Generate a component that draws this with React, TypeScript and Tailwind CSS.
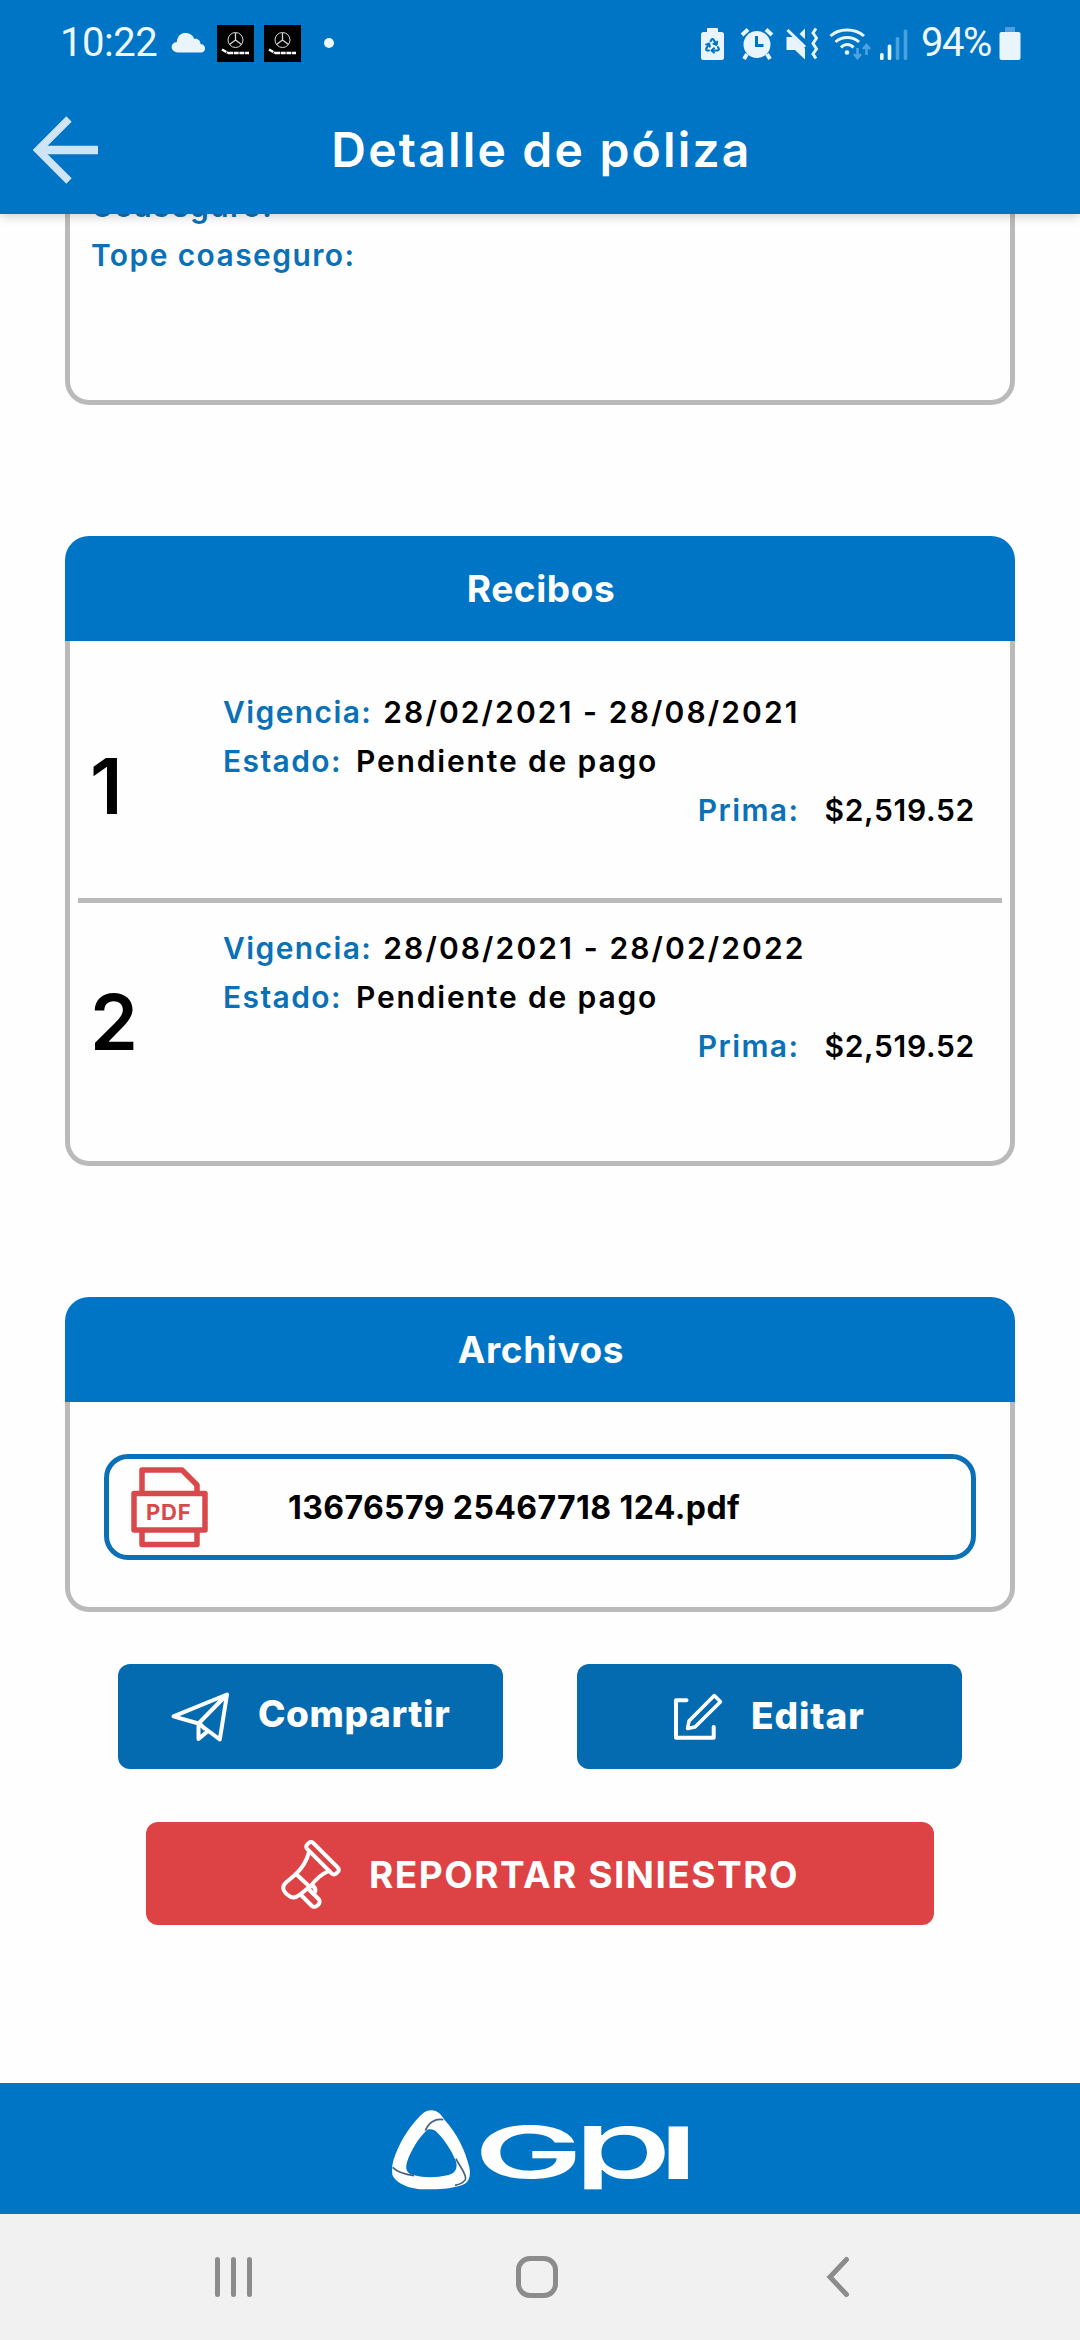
import type { ReactNode } from "react";
import { Recycle } from "lucide-react";

const receipts = [
  { id: 1, period: "28/02/2021 - 28/08/2021", status: "Pendiente de pago", amount: "$2,519.52" },
  { id: 2, period: "28/08/2021 - 28/02/2022", status: "Pendiente de pago", amount: "$2,519.52" },
];

function NotificationThumb() {
  return (
    <svg width="37" height="37" viewBox="0 0 37 37" className="bg-black">
      <g fill="none" stroke="#d8d8d8">
        <circle cx="18.5" cy="15" r="7.5" strokeWidth="1" />
        <path d="M18.5 8v7l-6 4.5M18.5 15l6 4.5" strokeWidth="1.3" />
        <path d="M5 24.5l6 3.5M11 28h21" stroke="#fff" strokeWidth="2.5" strokeDasharray="5 0.7" />
      </g>
    </svg>
  );
}

function StatusBar() {
  return (
    <div className="flex h-[86px] items-center justify-between pl-[60px] pr-[59px] font-['Roboto',sans-serif] text-[40px] text-[#edf8ff]">
      <div className="flex items-center">
        <span className="w-[111px] tracking-[-0.5px]">10:22</span>
        <svg width="35" height="22" viewBox="0 0 35 22" fill="#e9f4fc">
          <path d="M7 20.500C-1.500 20-1 10.500 5.800 10C6.500 3 10.500 1 14.500 1C19 1 22 3.500 23.300 7C27 6.200 29.500 9 29.500 12C35.500 12.500 35.500 20 30 20.500Z" />
        </svg>
        <div className="ml-[11px] flex gap-[10px]">
          <NotificationThumb />
          <NotificationThumb />
        </div>
        <span className="ml-[23px] size-[10px] rounded-full bg-[#edf8ff]" />
      </div>

      <div className="flex items-center">
        {/* battery protection */}
        <svg width="25" height="33" viewBox="0 0 25 33" fill="#e9f4fc">
          <rect x="7" y="1" width="11" height="6" rx="1" />
          <rect x="1" y="5" width="23" height="28" rx="2.500" />
          <Recycle x="4" y="10" width="17" height="17" color="#0075c6" strokeWidth={3} />
        </svg>
        {/* alarm */}
        <svg width="34" height="33" viewBox="0 0 34 33" className="ml-[15px]" fill="none" stroke="#e9f4fc">
          <circle cx="17" cy="17.500" r="13.500" fill="#e9f4fc" stroke="none" />
          <path d="M2 8l6-5.500M32 8l-6-5.500" strokeWidth="4" />
          <path d="M7 27l-3 5M27 27l3 5" strokeWidth="4" />
          <path d="M16.500 9v9.500h7" stroke="#0075c6" strokeWidth="3" />
        </svg>
        {/* muted, vibrating */}
        <svg width="34" height="33" viewBox="0 0 34 33" className="ml-[11px]" fill="#e9f4fc">
          <path d="M1.500 10H8L20 21.500V32.500L10 23H1.500Z" />
          <path d="M14.500 7L20 1.500V12Z" />
          <path d="M2.500 3L20 20" stroke="#e9f4fc" strokeWidth="3" />
          <path d="M31 1.500L28 6L31.500 11L28 16.500L31.500 22L28 27L31 31.500" fill="none" stroke="#e9f4fc" strokeWidth="3" />
        </svg>
        {/* wifi */}
        <svg width="44" height="33" viewBox="0 0 44 33" className="ml-[9px]" fill="none" stroke="#e9f4fc" strokeWidth="3">
          <path d="M2.500 9C11 1 27 1 36 9M7.500 15C14 9 24.500 9 31 15M13 20.500C16.500 16.500 22 16.500 25.500 20.500" />
          <circle cx="19" cy="25.500" r="2.300" fill="#e9f4fc" stroke="none" />
          <path d="M29.500 21v9.500M26 27l3.500 4l3.500-4M38.500 28v-9.500M35 22l3.500-4l3.500 4" stroke="#4fa3de" strokeWidth="2.500" />
        </svg>
        {/* signal */}
        <svg width="30" height="33" viewBox="0 0 30 33" className="ml-[7px]">
          <rect x="1" y="26" width="3.600" height="7" rx="1.500" fill="#edf8ff" />
          <rect x="8.700" y="17.500" width="3.600" height="15.500" rx="1.500" fill="#edf8ff" />
          <rect x="16.700" y="10" width="3.600" height="23" rx="1.500" fill="#4ba1de" />
          <rect x="24.700" y="2.500" width="3.600" height="30.500" rx="1.500" fill="#4ba1de" />
        </svg>
        <span className="ml-[12px] w-[78px] tracking-[-1.500px]">94%</span>
        <svg width="22" height="34" viewBox="0 0 22 34">
          <rect x="6" y="1" width="10" height="6" fill="#4ba1de" />
          <rect x="0.500" y="6" width="21" height="28" rx="2" fill="#e9f4fc" />
        </svg>
      </div>
    </div>
  );
}

function Header() {
  return (
    <header className="relative z-10 h-[214px] shrink-0 bg-[#0075c6] shadow-[0_2px_10px_rgba(0,0,0,0.2)]">
      <StatusBar />
      <div className="grid h-[127px] grid-cols-[1fr_auto_1fr] items-center">
        <svg width="70" height="70" viewBox="0 0 70 70" className="ml-[31px]" fill="none" stroke="#cfe4f5">
          <path d="M38 4L7 35L38 66" strokeWidth="7.500" />
          <path d="M10 35H67" strokeWidth="8.500" />
        </svg>
        <h1 className="pl-[3px] text-[48px] font-semibold tracking-[2.200px] text-white">Detalle de póliza</h1>
      </div>
    </header>
  );
}

function Label({ children }: { children: ReactNode }) {
  return <span className="tracking-[1.400px] text-[#0a71b6]">{children}</span>;
}

function Card({ title, children }: { title: string; children: ReactNode }) {
  return (
    <section>
      <h2 className="flex h-[105px] items-center justify-center rounded-t-[24px] bg-[#0075c6] pl-[2px] text-[37px] font-bold tracking-[0.600px] text-white">
        {title}
      </h2>
      <div className="rounded-b-[24px] border-[5px] border-t-0 border-[#bababa]">{children}</div>
    </section>
  );
}

function PdfIcon() {
  return (
    <svg width="80" height="84" viewBox="0 0 80 84" fill="none" stroke="#d9484a" strokeWidth="5.5" strokeLinejoin="round">
      <path d="M12 27V5H52L67 20V27" />
      <rect x="4" y="28.500" width="71" height="36.500" />
      <path d="M12 66V79.500H67V66" />
      <text x="16" y="54.500" fill="#d9484a" stroke="none" fontSize="22" fontWeight="700" letterSpacing="0.8">
        PDF
      </text>
    </svg>
  );
}

function SendIcon() {
  return (
    <svg width="62" height="52" viewBox="0 0 62 52" fill="none" stroke="#fff" strokeWidth="4" strokeLinejoin="round">
      <path d="M3.500 25.300L57 3.500L49.800 48.500L28.500 32.500L3.500 25.300ZM57 3.500L28.500 32.500L28.500 48L38 40M30 33L35 38" />
    </svg>
  );
}

function EditIcon() {
  return (
    <svg width="51" height="48" viewBox="0 0 51 48" fill="none" stroke="#fff" strokeWidth="4" strokeLinejoin="round" strokeLinecap="round">
      <path d="M13.500 7.300H3V44.700H40.700V34" />
      <path d="M14.500 35.500L16 28L41.300 2.500L47.500 8.700L22 34Z" strokeWidth="3.5" />
    </svg>
  );
}

function MegaphoneIcon() {
  return (
    <svg width="62" height="72" viewBox="0 0 62 72" fill="none" stroke="#fff" strokeWidth="4" strokeLinejoin="round" strokeLinecap="round">
      <rect x="22" y="16" width="41" height="8.500" rx="3" transform="rotate(45 42.500 20.250)" />
      <path d="M29 14C27 22 22 30 16 36L30 49C35 42 41 36 49 33" />
      <path d="M16 36L6 44.500C2 48 2.500 52 6 55.500L8.500 57.500C12 60.500 16 60 20 56.500L30 48.500" />
      <path d="M21 57L32 68C35 71 42 65 39 61.500L28.500 51" />
      <path d="M31.500 47.500C36 49 36.500 53 33.500 56" />
    </svg>
  );
}

function Logo() {
  return (
    <svg width="300" height="81.700" viewBox="150 140 900 245" fill="#fff" className="overflow-visible">
      <text transform="translate(402 350) scale(2.030 1)" fontSize="215" fontWeight="600">G</text>
      <text transform="translate(698 350) scale(1.700 1)" fontSize="284" fontWeight="500">p</text>
      <text transform="translate(959 352) scale(1.740 1)" fontSize="230" fontWeight="700" fontFamily="Liberation Sans">I</text>
      {/* squares off the short stem of the p */}
      <rect x="720" y="384" width="90" height="50" fill="#0075c6" />
      <path
        fillRule="evenodd"
        d="M275 147C292 147 304 160 314 176C350 215 375 265 388 318C394 348 385 368 360 373C330 382 300 384 258 384C215 384 170 370 157 340C154 320 158 300 166 280C185 230 220 180 250 155C258 149 266 147 275 147ZM262 205C275 202 284 206 290 212C318 240 335 270 348 300C354 322 345 338 322 342C290 350 250 350 222 342C200 338 194 322 202 300C212 268 235 230 262 205Z"
      />
      <g fill="none" stroke="#41627f" strokeWidth="5">
        <path d="M256 208C265 185 285 170 310 175" />
        <path d="M158 318C175 335 200 340 222 343" />
        <path d="M348 292C358 315 382 340 376 355C370 365 355 370 345 372" />
      </g>
    </svg>
  );
}

export default function App() {
  return (
    <div className="flex h-[2340px] w-[1080px] flex-col overflow-hidden bg-[#fefefe] font-['Inter',sans-serif] text-black">
      <Header />

      <main className="flex-1 overflow-hidden px-[65px]">
        {/* tail of the card that is scrolled under the header */}
        <section className="flex h-[191px] rounded-b-[24px] border-[5px] border-t-0 border-[#bababa] pl-[21px] text-[30px] font-semibold leading-[49px]">
          <div className="-mt-[32px] flex flex-col">
            <Label>Coaseguro:</Label>
            <Label>Tope coaseguro:</Label>
          </div>
        </section>

        <div className="mt-[131px]">
          <Card title="Recibos">
            <ul className="mx-2 pb-[22px] pt-[26px] text-[30px] font-semibold leading-[49px]">
              {receipts.map((receipt) => (
                <li
                  key={receipt.id}
                  className="flex h-[236px] border-[#bababa] pl-3 pr-[27px] pt-[21px] not-last:border-b-[5px]"
                >
                  <span className="w-[133px] pt-[74px] text-[77px]">{receipt.id}</span>
                  <div className="flex-1">
                    <p className="flex gap-[11px]">
                      <Label>Vigencia:</Label>
                      <span className="tracking-[2.120px]">{receipt.period}</span>
                    </p>
                    <p className="flex gap-[14px]">
                      <Label>Estado:</Label>
                      <span className="tracking-[1.850px]">{receipt.status}</span>
                    </p>
                    <p className="flex justify-end gap-[25px]">
                      <Label>Prima:</Label>
                      <span className="tracking-[0.700px]">{receipt.amount}</span>
                    </p>
                  </div>
                </li>
              ))}
            </ul>
          </Card>
        </div>

        <div className="mt-[131px]">
          <Card title="Archivos">
            <div className="px-[34px] pb-[47px] pt-[52px]">
              <div className="flex h-[106px] items-center rounded-[24px] border-[5px] border-[#0b70b6] pl-[21px]">
                <PdfIcon />
                <span className="ml-[78px] pt-[2px] text-[32px] font-bold tracking-[0.400px]">13676579 25467718 124.pdf</span>
              </div>
            </div>
          </Card>
        </div>

        <div className="mt-[52px] flex justify-center gap-[74px] text-[37px] font-extrabold text-white">
          <button className="flex h-[105px] w-[385px] items-center rounded-[12px] bg-[#056bb1] pl-[52px]">
            <SendIcon />
            <span className="ml-[26px] pb-[6px] tracking-[0.600px]">Compartir</span>
          </button>
          <button className="flex h-[105px] w-[385px] items-center rounded-[12px] bg-[#056bb1] pl-[96px]">
            <EditIcon />
            <span className="ml-[27px] pb-[2px] tracking-[0.900px]">Editar</span>
          </button>
        </div>

        <button className="mx-auto mt-[53px] flex h-[103px] w-[788px] items-center rounded-[12px] bg-[#dd4344] pl-[134px] text-[37px] font-bold text-white">
          <MegaphoneIcon />
          <span className="ml-[27px] pt-[3px] tracking-[1.500px]">REPORTAR SINIESTRO</span>
        </button>
      </main>

      <footer className="flex h-[131px] shrink-0 items-center justify-center bg-[#0075c6]">
        <Logo />
      </footer>

      <nav className="flex h-[126px] shrink-0 items-center justify-between bg-[#f1f1f1] pl-[215px] pr-[230px] text-[#8c8c8c]">
        <div className="flex gap-[11px]">
          <span className="h-10 w-[5px] rounded-full bg-current" />
          <span className="h-10 w-[5px] rounded-full bg-current" />
          <span className="h-10 w-[5px] rounded-full bg-current" />
        </div>
        <span className="-ml-[5px] size-[42px] rounded-[14px] border-[5px] border-current" />
        <svg width="24" height="42" viewBox="0 0 24 42" fill="none" stroke="currentColor" strokeWidth="5" strokeLinecap="round">
          <path d="M20.500 3.500L4 21L20.500 38.500" />
        </svg>
      </nav>
    </div>
  );
}
